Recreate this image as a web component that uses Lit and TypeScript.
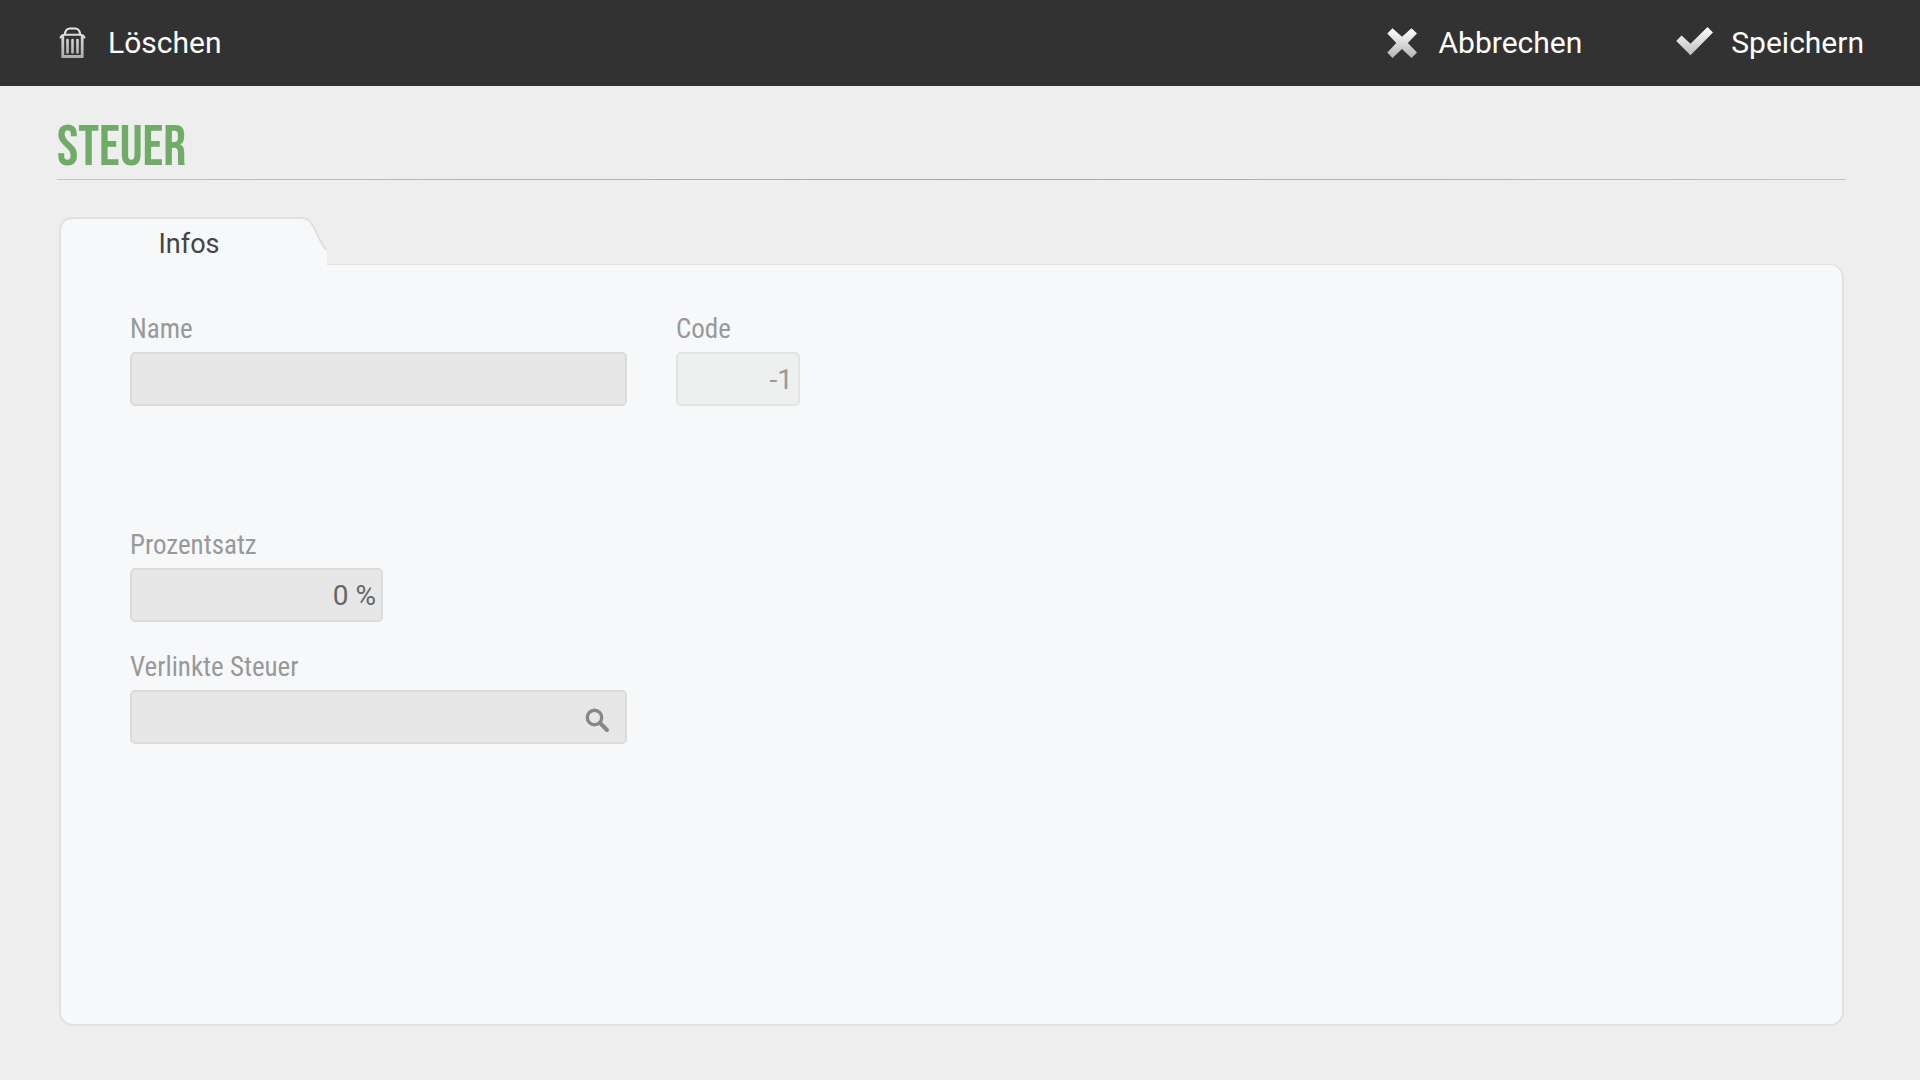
import { LitElement, html, css, svg } from "lit";
import { customElement, state } from "lit/decorators.js";

const trashIcon = svg`<svg class="icon trash" viewBox="0 0 30 32" aria-hidden="true">
  <defs><linearGradient id="trash-fill" x1="0" y1="0" x2="0" y2="32" gradientUnits="userSpaceOnUse">
    <stop offset="0" stop-color="#ececec"/><stop offset="1" stop-color="#a8a8a8"/></linearGradient></defs>
  <g fill="none" stroke="url(#trash-fill)" stroke-linejoin="round" stroke-linecap="round">
    <path d="M5 7.500 C5 3.500 7.500 1.500 10 1.500 H15 C17.500 1.500 20 3.500 20 7.500" stroke-width="2.200"/>
    <path d="M0.500 10.500 C1.500 8.500 3 7.800 4.500 7.800 H20 C22 7.800 23.500 8.500 24.500 10.500" stroke-width="2"/>
    <path d="M2.800 9.500 V29.500 H22.200 V9.500" stroke-width="2.800" stroke-linejoin="miter"/>
    <path d="M7.500 13 V25.500 M12.500 13 V25.500 M17.500 13 V25.500" stroke-width="2.600"/>
  </g></svg>`;

const crossIcon = svg`<svg class="icon cross" viewBox="0 0 34 32" aria-hidden="true">
  <defs><linearGradient id="cross-fill" x1="0" y1="0" x2="0" y2="1">
    <stop offset="0" stop-color="#ffffff"/><stop offset="1" stop-color="#b4b4b4"/></linearGradient></defs>
  <path fill="url(#cross-fill)" d="M5.500 1.200 L15 9.800 L24.500 1.200 L30 6.500 L20.800 16 L30 25.500 L24.500 31 L15 22 L5.500 31 L0.300 25.500 L9.300 16 L0.300 6.500 Z"/>
</svg>`;

const checkIcon = svg`<svg class="icon check" viewBox="0 0 36 32" aria-hidden="true">
  <defs><linearGradient id="check-fill" x1="0" y1="0" x2="0" y2="1">
    <stop offset="0" stop-color="#ffffff"/><stop offset="1" stop-color="#bcbcbc"/></linearGradient></defs>
  <path fill="url(#check-fill)" d="M30.500 0 L36 5.500 L13.500 28.300 L-0.800 14 L4.500 8.500 L13.500 16.800 Z"/>
</svg>`;

const searchIcon = svg`<svg class="lens" viewBox="0 0 26 26" aria-hidden="true">
  <g fill="none" stroke="#878787"><circle cx="9.500" cy="9.500" r="7.200" stroke-width="3.400"/>
  <path d="M15 15 L22 22" stroke-width="4" stroke-linecap="round"/></g>
</svg>`;

@customElement("app-root")
export class AppRoot extends LitElement {
  @state() private name = "";
  @state() private rate = "0 %";
  @state() private linkedTax = "";

  static styles = css`
    :host {
      display: flex;
      flex-direction: column;
      min-height: 100vh;
      background: #eeeeee;
      font-family: Roboto, "Liberation Sans", sans-serif;
    }
    button, input {
      font: inherit;
      color: inherit;
      background: none;
      border: 0;
      margin: 0;
      padding: 0;
    }
    button { cursor: pointer; }
    .toolbar {
      display: flex;
      align-items: center;
      gap: 95px;
      height: 86px;
      padding: 0 56px 0 60px;
      background: #323232;
      color: #ffffff;
      font-size: 30px;
      line-height: 36px;
    }
    .action {
      display: flex;
      align-items: center;
      gap: 18px;
    }
    .spacer { flex: 1; }
    .icon { display: block; height: 32px; overflow: visible; }
    .trash { width: 30px; }
    .cross { width: 34px; }
    .check { width: 36px; }
    main {
      flex: 1;
      display: flex;
      flex-direction: column;
      padding: 31px 76px 54px 57px;
    }
    h1 {
      margin: 0;
      color: #70ac68;
      font-family: "Bebas Neue", "Liberation Sans", sans-serif;
      font-weight: 400;
      font-size: 57px;
      line-height: 62px;
    }
    .rule {
      height: 1px;
      margin: 0 -2px 37px 0;
      background: linear-gradient(90deg, #c2c2c2, #a6a6a6 50%, #c2c2c2);
    }
    .tabs { display: flex; padding-left: 2px; }
    .tab {
      position: relative;
      width: 268px;
      height: 49px;
      margin-bottom: -2px;
      padding: 4px 8px 0 0;
      color: #444444;
      font-size: 27px;
      line-height: 32px;
    }
    .tab-shape {
      position: absolute;
      inset: 0;
      width: 268px;
      height: 49px;
    }
    .tab-label { position: relative; }
    .panel {
      flex: 1;
      display: flex;
      flex-direction: column;
      align-items: flex-start;
      gap: 28px;
      margin-left: 2px;
      padding: 47px 69px;
      background: #f7f8fa;
      border: 2px solid #e0e1e1;
      border-top-width: 1px;
      border-radius: 0 14px 14px 14px;
    }
    .row { display: flex; gap: 49px; margin-bottom: 94px; }
    .field { display: flex; flex-direction: column; }
    label {
      color: #999999;
      font-family: "Roboto Condensed", "Open Sans", sans-serif;
      font-size: 27px;
      line-height: 34px;
      padding-bottom: 6px;
    }
    .box {
      display: flex;
      align-items: center;
      box-sizing: border-box;
      height: 54px;
      padding: 0 5px;
      background: #e7e7e7;
      border: 2px solid #dadbdb;
      border-radius: 5px;
      color: #666666;
      font-size: 28px;
    }
    .wide { width: 497px; }
    .medium { width: 253px; text-align: right; }
    .small { width: 124px; text-align: right; }
    .box:disabled {
      background: #eef0f0;
      border-color: #e3e5e5;
      color: #999999;
    }
    .lookup { padding-right: 14px; }
    .lookup input { flex: 1; min-width: 0; height: 100%; outline: none; }
    .lens { display: block; width: 26px; height: 26px; margin-top: 8px; }
  `;

  render() {
    return html`
      <header class="toolbar">
        <button class="action" type="button">${trashIcon}<span>Löschen</span></button>
        <div class="spacer"></div>
        <button class="action" type="button">${crossIcon}<span>Abbrechen</span></button>
        <button class="action" type="submit" form="tax">${checkIcon}<span>Speichern</span></button>
      </header>
      <main>
        <h1>STEUER</h1>
        <div class="rule"></div>
        <div class="tabs" role="tablist">
          <button class="tab" type="button" role="tab" id="tab-infos" aria-selected="true" aria-controls="tax">
            <svg class="tab-shape" viewBox="0 0 268 49" aria-hidden="true">
              <path fill="#f7f8fa" d="M1 49 V15 Q1 1 15 1 H243 Q250 1 254 9 L262 25 Q265 31 268 33 V49 Z"/>
              <path fill="none" stroke="#e0e1e1" stroke-width="2" d="M1 49 V15 Q1 1 15 1 H243 Q250 1 254 9 L262 25 Q265 31 268 33"/>
            </svg>
            <span class="tab-label">Infos</span>
          </button>
        </div>
        <form class="panel" id="tax" role="tabpanel" aria-labelledby="tab-infos"
          @submit=${(e: Event) => e.preventDefault()}>
          <div class="row">
            <div class="field">
              <label for="name">Name</label>
              <input class="box wide" id="name" type="text" .value=${this.name}
                @input=${(e: Event) => (this.name = (e.target as HTMLInputElement).value)}>
            </div>
            <div class="field">
              <label for="code">Code</label>
              <input class="box small" id="code" type="text" .value=${"-1"} disabled>
            </div>
          </div>
          <div class="field">
            <label for="rate">Prozentsatz</label>
            <input class="box medium" id="rate" type="text" .value=${this.rate}
              @input=${(e: Event) => (this.rate = (e.target as HTMLInputElement).value)}>
          </div>
          <div class="field">
            <label for="linked">Verlinkte Steuer</label>
            <div class="box wide lookup">
              <input id="linked" type="text" .value=${this.linkedTax}
                @input=${(e: Event) => (this.linkedTax = (e.target as HTMLInputElement).value)}>
              <button type="button" aria-label="Suchen">${searchIcon}</button>
            </div>
          </div>
        </form>
      </main>
    `;
  }
}
